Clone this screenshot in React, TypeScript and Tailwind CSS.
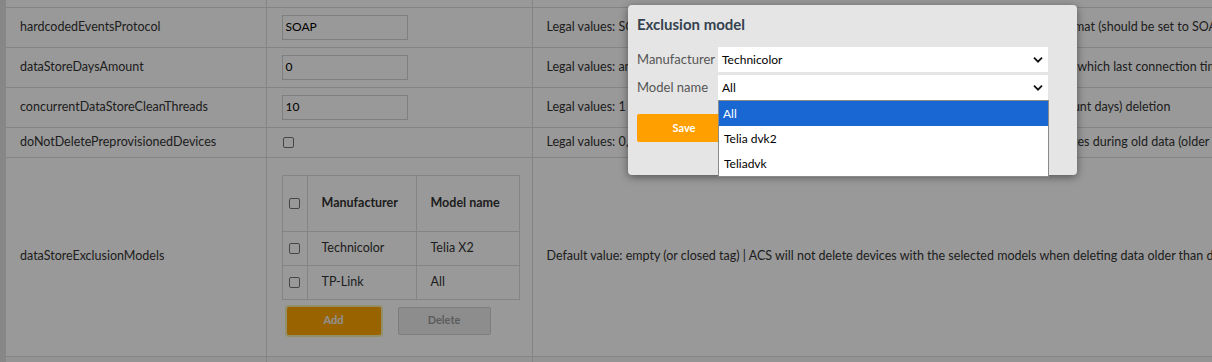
import React from "react";

const rows = [
  {
    name: "hardcodedEventsProtocol",
    value: "SOAP",
    desc: "Legal values: SOAP, REST | Default value: SOAP | Protocol of each hardcoded events message format (should be set to SOAP for older CPE firmware)",
  },
  {
    name: "dataStoreDaysAmount",
    value: "0",
    desc: "Legal values: any positive integer | Default value: 0 | ACS will automatically delete data of devices which last connection time is older than the given amount of days",
  },
  {
    name: "concurrentDataStoreCleanThreads",
    value: "10",
    desc: "Legal values: 1 - 20 | Default value: 10 | Thread count for old data (older than dataStoreDaysAmount days) deletion",
  },
];

function Chevron() {
  return (
    <svg width="10" height="7" viewBox="0 0 10 7" className="absolute right-[5px] top-1/2 -translate-y-1/2">
      <path d="M1 1.2 L5 5.2 L9 1.2" fill="none" stroke="#111" strokeWidth="1.8" />
    </svg>
  );
}

function Box() {
  return <span className="inline-block w-[11px] h-[11px] border border-[#767676] rounded-[2px] bg-white align-middle" />;
}

export default function App() {
  return (
    <div className="relative w-[1212px] h-[362px] overflow-hidden bg-[#e2e2e2] text-[#333] text-[12.5px] font-['Lato',sans-serif]">
      <div className="ml-[6px] bg-white h-full">
        <table className="border-collapse table-fixed w-[1400px]">
          <colgroup>
            <col className="w-[260px]" />
            <col className="w-[266px]" />
            <col />
          </colgroup>
          <tbody>
            <tr className="h-[7px]">
              <td className="border-b border-r border-[#dcdcdc]" />
              <td className="border-b border-r border-[#dcdcdc]" />
              <td className="border-b border-[#dcdcdc]" />
            </tr>
            {rows.map((r) => (
              <tr key={r.name} className="h-[40px]">
                <td className="border-b border-r border-[#dcdcdc] pl-[14px]">{r.name}</td>
                <td className="border-b border-r border-[#dcdcdc] pl-[15px]">
                  <div className="w-[126px] h-[25px] border border-[#d4d4d4] px-[3px] flex items-center text-[12px] text-black">
                    {r.value}
                  </div>
                </td>
                <td className="border-b border-[#dcdcdc] pl-[14px] whitespace-nowrap">{r.desc}</td>
              </tr>
            ))}
            <tr className="h-[30px]">
              <td className="border-b border-r border-[#dcdcdc] pl-[14px]">doNotDeletePreprovisionedDevices</td>
              <td className="border-b border-r border-[#dcdcdc] pl-[16px]">
                <Box />
              </td>
              <td className="border-b border-[#dcdcdc] pl-[14px] whitespace-nowrap">
                Legal values: 0, 1 | Default value: 0 | If set to 1 (true), ACS will not delete any preprovisioned devices during old data (older than dataStoreDaysAmount days) deletion
              </td>
            </tr>
            <tr className="h-[199px]">
              <td className="border-b border-r border-[#dcdcdc] pl-[14px]">dataStoreExclusionModels</td>
              <td className="border-b border-r border-[#dcdcdc] pl-[15px] align-top pt-[17px]">
                <table className="border-collapse w-[238px]">
                  <tbody>
                    <tr className="h-[56px]">
                      <td className="border border-[#dcdcdc] w-[25px] text-center"><Box /></td>
                      <td className="border border-[#dcdcdc] w-[109px] pl-[14px] font-bold">Manufacturer</td>
                      <td className="border border-[#dcdcdc] pl-[14px] font-bold">Model name</td>
                    </tr>
                    <tr className="h-[34px]">
                      <td className="border border-[#dcdcdc] text-center"><Box /></td>
                      <td className="border border-[#dcdcdc] pl-[14px]">Technicolor</td>
                      <td className="border border-[#dcdcdc] pl-[14px]">Telia X2</td>
                    </tr>
                    <tr className="h-[34px]">
                      <td className="border border-[#dcdcdc] text-center"><Box /></td>
                      <td className="border border-[#dcdcdc] pl-[14px]">TP-Link</td>
                      <td className="border border-[#dcdcdc] pl-[14px]">All</td>
                    </tr>
                  </tbody>
                </table>
                <div className="flex gap-[17px] mt-[7px] ml-[5px]">
                  <button className="w-[94px] h-[28px] bg-[#ffa500] text-[#f2f2f2] font-bold text-[11px] rounded-[2px] ring-2 ring-[#f5eeb0]">
                    Add
                  </button>
                  <button className="w-[93px] h-[28px] bg-[#ececec] border border-[#d0d0d0] text-[#9a9a9a] font-bold text-[11px] rounded-[2px]">
                    Delete
                  </button>
                </div>
              </td>
              <td className="border-b border-[#dcdcdc] pl-[14px] whitespace-nowrap">
                Default value: empty (or closed tag) | ACS will not delete devices with the selected models when deleting data older than dataStoreDaysAmount days
              </td>
            </tr>
            <tr className="h-[10px]">
              <td className="border-r border-[#dcdcdc] bg-[#f7f7f7]" />
              <td className="border-r border-[#dcdcdc] bg-[#f7f7f7]" />
              <td className="bg-[#f7f7f7]" />
            </tr>
          </tbody>
        </table>
      </div>

      {/* dim overlay */}
      <div className="absolute inset-0 bg-black/40" />

      {/* modal */}
      <div className="absolute left-[628px] top-[5px] w-[449px] h-[170px] bg-[#e5e5e5] rounded-[4px] shadow-[0_2px_8px_rgba(0,0,0,0.45)] px-[9px] pt-[9px]">
        <h3 className="text-[15px] font-bold text-[#34424f] leading-[20px]">Exclusion model</h3>
        <div className="mt-[13px] flex flex-col gap-[3px]">
          <div className="flex items-center">
            <span className="w-[81px] text-[13px] text-[#555]">Manufacturer</span>
            <div className="relative w-[330px] h-[25px] bg-white flex items-center pl-[4px] text-[12px] text-black">
              Technicolor
              <Chevron />
            </div>
          </div>
          <div className="flex items-center">
            <span className="w-[81px] text-[13px] text-[#555]">Model name</span>
            <div className="relative w-[330px] h-[25px] bg-white flex items-center pl-[4px] text-[12px] text-black">
              All
              <Chevron />
            </div>
          </div>
        </div>
        <button className="mt-[14px] w-[94px] h-[28px] bg-[#ffa000] text-white font-bold text-[11px] rounded-[2px]">
          Save
        </button>
      </div>

      {/* open select list */}
      <div className="absolute left-[718px] top-[100px] w-[331px] bg-white border border-[#8a8a8a] text-[12px] text-black">
        <div className="h-[25px] flex items-center pl-[4px] bg-[#1967d2] text-white">All</div>
        <div className="h-[25px] flex items-center pl-[5px]">Telia dvk2</div>
        <div className="h-[25px] flex items-center pl-[5px]">Teliadvk</div>
      </div>
    </div>
  );
}
